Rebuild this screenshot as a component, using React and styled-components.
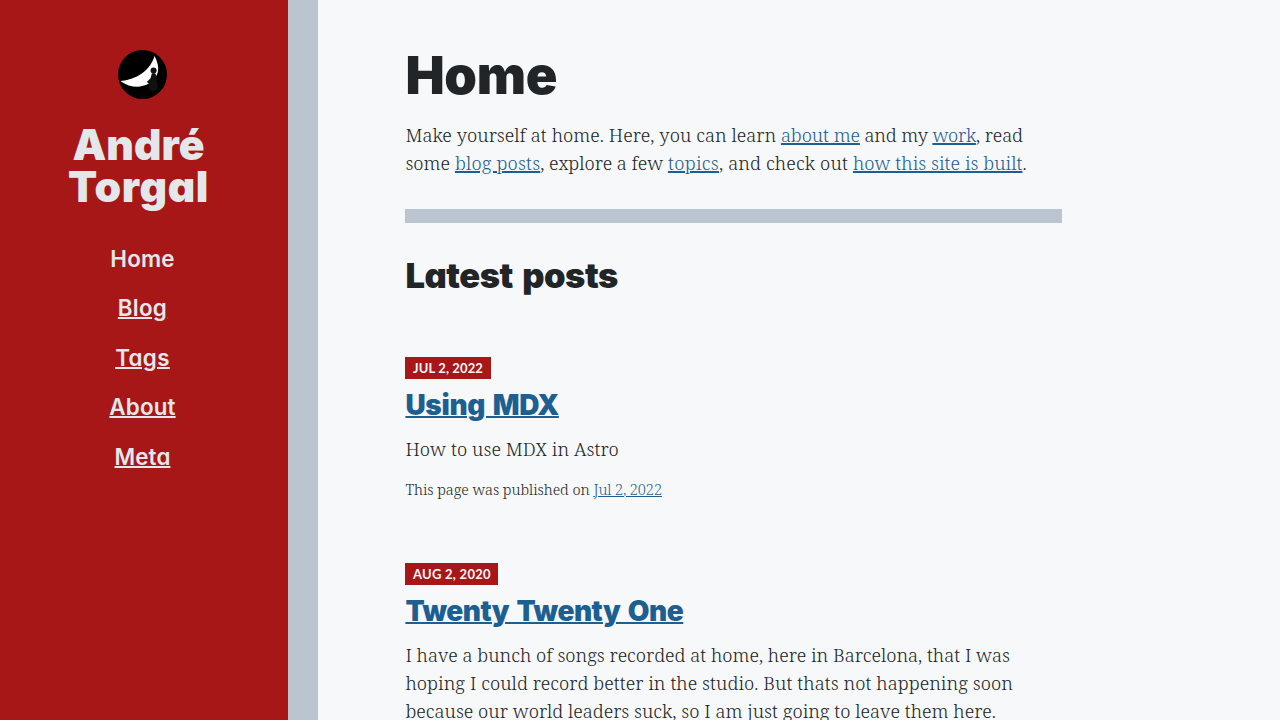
import React from 'react';
import styled, { createGlobalStyle } from 'styled-components';

const sans = 'Inter, "Noto Sans", sans-serif';
const serif = '"Noto Serif", "Liberation Serif", serif';

const color = {
  paper: '#f7f8fa',
  ink: '#212527',
  red: '#a71717',
  slate: '#bbc5cf',
  light: '#e3e7ea',
  link: '#1d5f91',
};

const GlobalStyle = createGlobalStyle`
  * { box-sizing: border-box; }
  body {
    margin: 0;
    background: ${color.paper};
    color: ${color.ink};
    font: 300 18.4px/28px ${serif};
    overflow: hidden;
  }
  h1, h2, h3, p { margin: 0; }
`;

const Page = styled.div`
  display: flex;
  height: 720px;
  overflow: hidden;
`;

const Sidebar = styled.aside`
  flex: 0 0 318px;
  display: flex;
  flex-direction: column;
  align-items: center;
  padding: 50px 3px 0 0;
  border-right: 30px solid ${color.slate};
  background: ${color.red};
  color: ${color.light};
  font-family: ${sans};
  font-feature-settings: "cv11";
`;

const Logo = styled.svg`
  display: block;
  width: 49px;
  height: 49px;
  margin-right: 1px;
`;

const SiteName = styled.div`
  display: flex;
  flex-direction: column;
  align-items: center;
  margin-top: 25px;
  padding-right: 8px;
  font-size: 42.6px;
  line-height: 42px;
  font-weight: 900;
`;

const Nav = styled.nav`
  display: flex;
  flex-direction: column;
  align-items: center;
  gap: 19.45px;
  margin-top: 35.9px;
`;

const NavItem = styled.a`
  color: inherit;
  font-size: 22.4px;
  line-height: 30px;
  font-weight: 600;
  letter-spacing: ${p => p.$ls}px;
  text-decoration: ${p => (p.$current ? 'none' : 'underline')};
  text-decoration-thickness: 1.5px;
  text-underline-offset: 1px;
`;

const Main = styled.main`
  flex: 1;
  padding: 46px 218px 0 87.4px;
  white-space: nowrap;
`;

const Heading = styled.h1`
  font-family: ${sans};
  font-weight: 900;
  font-feature-settings: "cv11";
`;

const Title = styled(Heading)`
  font-size: 52.3px;
  line-height: 58px;
  letter-spacing: -0.3px;
`;

const Section = styled(Heading).attrs({ as: 'h2' })`
  margin-top: 33px;
  font-size: 34.5px;
  line-height: 40px;
  letter-spacing: -0.47px;
  word-spacing: 3px;
`;

const Line = styled.span`
  display: block;
  letter-spacing: ${p => p.$ls || 0}px;
`;

const Run = styled.span`
  letter-spacing: ${p => p.$ls}px;
  white-space: pre;
`;

const Link = styled(Run).attrs({ as: 'a' })`
  color: ${color.link};
  text-decoration: underline;
  text-decoration-thickness: ${p => (p.$thin ? 1 : 1.5)}px;
  text-underline-offset: 1px;
`;

const Intro = styled.p`
  margin-top: 17px;
`;

const Rule = styled.div`
  height: 14px;
  margin-top: 32px;
  background: ${color.slate};
`;

const Post = styled.article`
  display: flex;
  flex-direction: column;
  align-items: flex-start;
  margin-top: ${p => p.$gap}px;
`;

const Badge = styled.span`
  height: 21.5px;
  padding: 0 7.6px;
  background: ${color.red};
  color: ${color.paper};
  font: 700 13px/22px Lato, sans-serif;
  letter-spacing: ${p => p.$ls}px;
  text-transform: uppercase;
`;

const PostTitle = styled(Heading).attrs({ as: 'h3' })`
  margin-top: 8.5px;
  color: ${color.link};
  font-size: 28px;
  line-height: 36px;
  letter-spacing: ${p => p.$ls}px;
  word-spacing: 2.4px;
  text-decoration: underline;
  text-decoration-thickness: 2px;
  text-underline-offset: 1px;
`;

const Text = styled.p`
  margin-top: 11.5px;
`;

const Meta = styled.p`
  margin-top: 12px;
  font-size: 14.6px;
`;

const navItems = [
  { label: 'Home', ls: 0.15, current: true },
  { label: 'Blog', ls: 0.25 },
  { label: 'Tags', ls: 0.33 },
  { label: 'About', ls: 0.15 },
  { label: 'Meta', ls: 0.1 },
];

function MoonLogo() {
  return (
    <Logo viewBox="0 0 146 146">
      <circle cx="73" cy="73" r="73" />
      <path fill="#fff" d="M7 92C40 91 92 72 109 18C121 42 124 62 113 80C98 108 48 123 7 92Z" />
      <g fill="#111">
        <circle cx="106" cy="61" r="9" />
        <path d="M101 69H111Q117 77 115 90Q122 108 115 118Q105 125 94 117Q90 108 94 101L86 95L97 84Z" />
      </g>
    </Logo>
  );
}

export default function App() {
  return (
    <>
      <GlobalStyle />
      <Page>
        <Sidebar>
          <MoonLogo />
          <SiteName>
            <Run $ls={0}>André</Run>
            <Run $ls={0.6}>Torgal</Run>
          </SiteName>
          <Nav>
            {navItems.map(({ label, ls, current }) => (
              <NavItem key={label} $ls={ls} $current={current}>{label}</NavItem>
            ))}
          </Nav>
        </Sidebar>
        <Main>
          <Title>Home</Title>
          <Intro>
            <Line>
              <Run $ls={0.049}>Make yourself at home. Here, you can learn </Run>
              <Link $ls={-0.07}>about me</Link>
              <Run $ls={-0.144}> and my </Run>
              <Link $ls={-0.247}>work</Link>
              <Run $ls={-0.062}>, read</Run>
            </Line>
            <Line>
              <Run $ls={0.043}>some </Run>
              <Link $ls={0.155}>blog posts</Link>
              <Run $ls={-0.041}>, explore a few </Run>
              <Link $ls={0.292}>topics</Link>
              <Run $ls={0.145}>, and check out </Run>
              <Link $ls={0.038}>how this site is built</Link>
              <Run $ls={0}>.</Run>
            </Line>
          </Intro>
          <Rule />
          <Section>Latest posts</Section>
          <Post $gap={61}>
            <Badge $ls={0.12}>Jul 2, 2022</Badge>
            <PostTitle $ls={-0.32}>Using MDX</PostTitle>
            <Text>
              <Line $ls={0.065}>How to use MDX in Astro</Line>
            </Text>
            <Meta>
              <Run $ls={-0.059}>This page was published on </Run>
              <Link $thin $ls={-0.133}>Jul 2, 2022</Link>
            </Meta>
          </Post>
          <Post $gap={60.5}>
            <Badge $ls={0.26}>Aug 2, 2020</Badge>
            <PostTitle $ls={-0.48}>Twenty Twenty One</PostTitle>
            <Text>
              <Line $ls={0.004}>I have a bunch of songs recorded at home, here in Barcelona, that I was</Line>
              <Line $ls={0.051}>hoping I could record better in the studio. But thats not happening soon</Line>
              <Line $ls={0.023}>because our world leaders suck, so I am just going to leave them here.</Line>
            </Text>
          </Post>
        </Main>
      </Page>
    </>
  );
}
